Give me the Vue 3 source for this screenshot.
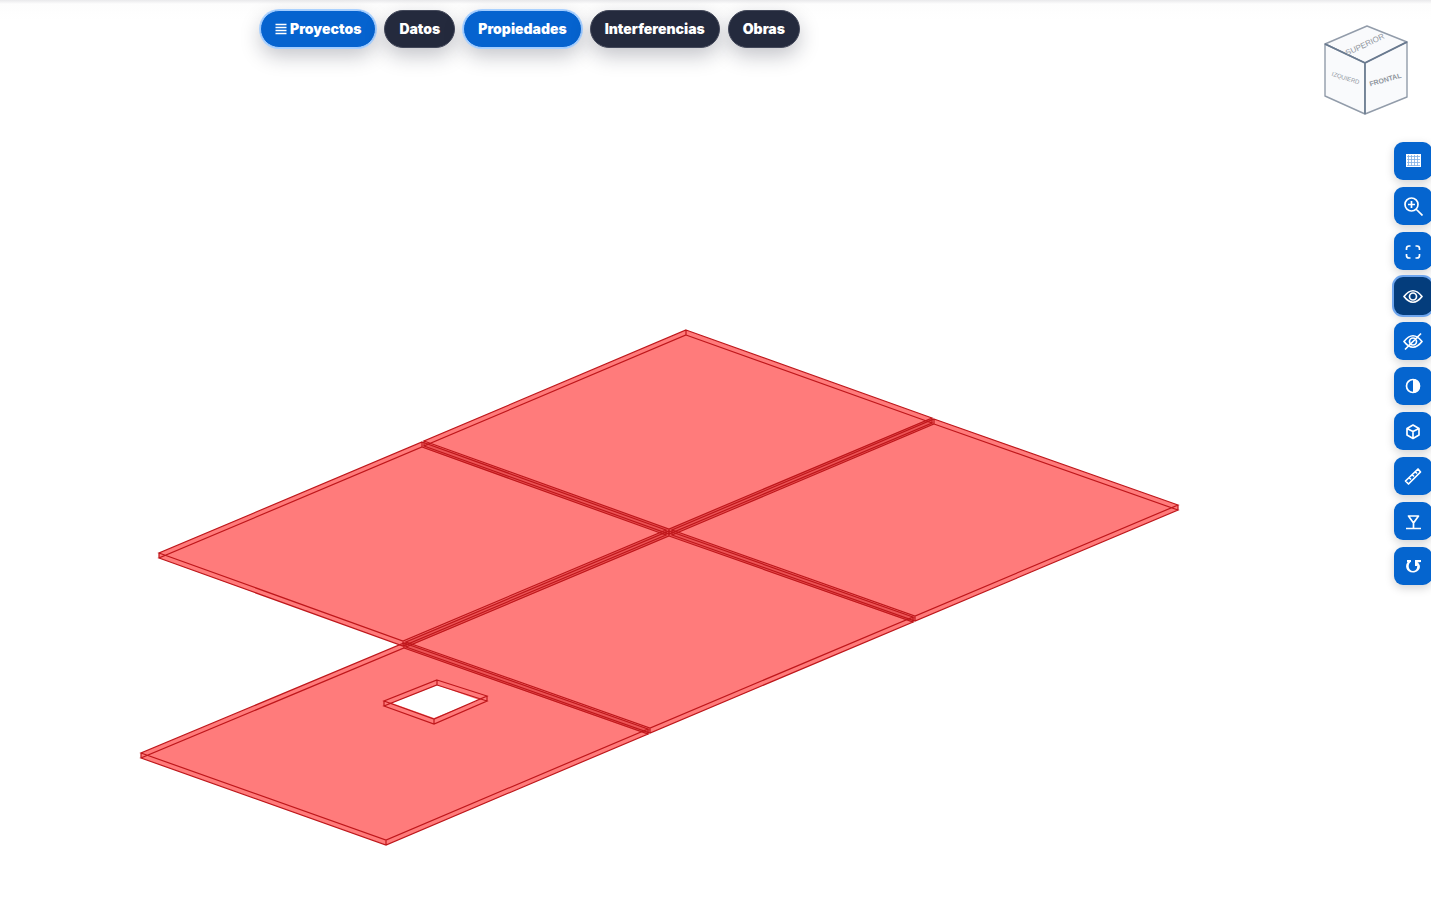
<template>
  <div class="viewer">
    <svg class="scene" viewBox="0 0 1431 920" role="img" aria-label="Modelo 3D">
      <path class="slab-fill" :d="slabFill" />
      <line v-for="(seam, index) in seams" :key="index" class="seam" :x1="seam[0]" :y1="seam[1]" :x2="seam[2]" :y2="seam[3]" />
      <path v-for="(slab, index) in slabs" :key="index" class="edge" :d="boxEdges(slab)" />
      <path class="hole" d="M437 685L479 700L434 718L392 703Z" />
      <path class="edge" :d="boxEdges(opening)" />
    </svg>

    <nav class="top-menu">
      <button
        v-for="item in menu"
        :key="item.label"
        type="button"
        class="pill"
        :class="{ active: item.active }"
      >
        <svg v-if="item.icon" class="menu-icon" viewBox="0 0 12 12" aria-hidden="true">
          <path d="M0.5 1.5h11M0.5 4.5h11M0.5 7.5h11M0.5 10.5h11" />
        </svg>
        {{ item.label }}
      </button>
    </nav>

    <svg class="view-cube" viewBox="0 0 90 96" role="img" aria-label="Cubo de vistas">
      <path class="face" d="M47 4L87 20L45 41L5 22Z" />
      <path class="face" d="M5 22L45 41V92L5 74Z" />
      <path class="face" d="M45 41L87 20V75L45 92Z" />
      <path class="cube-inner" d="M5 22L45 41L87 20M45 41V92" />
      <text class="face-label large" transform="translate(46 25) rotate(-25)">SUPERIOR</text>
      <text class="face-label small" transform="translate(25 58) rotate(17)">IZQUIERD</text>
      <text class="face-label" transform="translate(66 60) rotate(-16)">FRONTAL</text>
    </svg>

    <div class="tools">
      <button
        v-for="tool in tools"
        :key="tool.name"
        type="button"
        class="tool"
        :class="{ active: tool.active }"
        :aria-label="tool.name"
      >
        <svg viewBox="0 0 20 20" aria-hidden="true">
          <path v-if="tool.solid" class="solid" :d="tool.solid" />
          <path v-if="tool.line" class="line" :d="tool.line" />
          <path v-if="tool.thin" class="thin" :d="tool.thin" />
        </svg>
      </button>
    </div>
  </div>
</template>

<script setup>
const THICKNESS = 5;

const menu = [
  { label: 'Proyectos', active: true, icon: true },
  { label: 'Datos' },
  { label: 'Propiedades', active: true },
  { label: 'Interferencias' },
  { label: 'Obras' }
];

// top face corners: back, right, front, left
const slabs = [
  [[686, 330], [932, 418], [669, 529], [424, 441]],
  [[934, 419], [1178, 505], [915, 616], [672, 530]],
  [[422, 442], [666, 530], [403, 641], [159, 553]],
  [[669, 531], [913, 617], [650, 728], [406, 642]],
  [[404, 643], [648, 729], [386, 840], [141, 753]]
];

const opening = [[437, 680], [487, 696], [434, 719], [384, 701]];

const seams = [
  [424, 445, 914, 620],
  [932, 421, 404, 645],
  [404, 645, 649, 732]
];

const slabFill = slabs.map(([back, right, front, left]) =>
  `M${back}L${right}v${THICKNESS}L${front[0]} ${front[1] + THICKNESS}L${left[0]} ${left[1] + THICKNESS}V${left[1]}Z`
).join('');

function boxEdges(corners) {
  const lower = corners.map(([x, y]) => [x, y + THICKNESS]);
  const pillars = corners.map(([x, y]) => `M${x} ${y}v${THICKNESS}`).join('');
  return `M${corners.join('L')}ZM${lower.join('L')}Z${pillars}`;
}

const tools = [
  {
    name: 'Cuadrícula',
    solid: 'M3 3H18V16H3Z',
    thin: 'M5.5 4V15M8.5 4V15M11.5 4V15M14.5 4V15M4 5.5H17M4 8.5H17M4 11.5H17M4 14.5H17'
  },
  {
    name: 'Acercar',
    line: 'M15 8.5A6.5 6.5 0 1 1 2 8.5A6.5 6.5 0 0 1 15 8.5ZM13 13L19.5 19.5M8.5 5V12M5 8.5H12'
  },
  {
    name: 'Encuadrar',
    line: 'M3.5 9V7.5Q3.5 5 6 5H7.5M12.5 5H14Q16.5 5 16.5 7.5V9M16.5 13V14.5Q16.5 17 14 17H12.5M7.5 17H6Q3.5 17 3.5 14.5V13',
  },
  {
    name: 'Mostrar',
    active: true,
    line: 'M1 10.5Q10 -1 19 10.5Q10 22 1 10.5ZM13.5 10.5A3.5 3.5 0 1 1 6.5 10.5A3.5 3.5 0 0 1 13.5 10.5Z'
  },
  {
    name: 'Ocultar',
    line: 'M1 10.5Q10 -1 19 10.5Q10 22 1 10.5ZM13.5 10.5A3.5 3.5 0 1 1 6.5 10.5A3.5 3.5 0 0 1 13.5 10.5ZM2 18.5L18 2.5'
  },
  {
    name: 'Transparencia',
    solid: 'M10 3A7 7 0 0 1 10 17Z',
    line: 'M16.5 10A6.5 6.5 0 1 1 3.5 10A6.5 6.5 0 0 1 16.5 10Z'
  },
  {
    name: 'Sección',
    line: 'M10 4L16 7.5V14L10 17.5L4 14V7.5ZM4 7.5L10 10.5L16 7.5M10 10.5V17.5'
  },
  {
    name: 'Medir',
    line: 'M2.5 15L15 3L17.5 6L5.5 18ZM6 11.5L8 13.5M9 8.5L11 10.5M12 5.5L14 7.5'
  },
  {
    name: 'Nivel',
    line: 'M5.5 5H15.5L10.5 12ZM10.5 12V17M3 17.5H18'
  },
  {
    name: 'Restablecer',
    solid: 'M11 4H18V6L14 6.5V10H12V4Z M4 4H8V6H4Z M14 6C20 10 16 16.5 10 16.5C3 16.5 1 9 5.5 5L7.5 6C4 9 6 15 10 15C14 15 15.5 10 13 7Z'
  }
];
</script>

<style>
body {
  margin: 0;
  background: #fff;
}
</style>

<style scoped>
.viewer {
  position: relative;
  min-height: 100vh;
  overflow: hidden;
  background: linear-gradient(#e9e9eb, #fdfdfd 4px, #fff 20px);
}

.scene {
  display: block;
  width: 100%;
}

.slab-fill {
  fill: #ff7b7b;
}

.seam {
  stroke: #ec5456;
  stroke-width: 6;
}

.edge {
  fill: none;
  stroke: #bf171b;
  stroke-width: 1.2;
}

.hole {
  fill: #fff;
}

.top-menu {
  position: absolute;
  top: 10px;
  left: 260px;
  display: flex;
  gap: 8px;
}

.pill {
  display: flex;
  align-items: center;
  gap: 3px;
  height: 38px;
  padding: 0 14px;
  border: 1px solid #43485a;
  border-radius: 19px;
  background: #242a3d;
  box-shadow: 0 8px 20px rgba(20, 25, 45, 0.25);
  color: #fff;
  font-family: Inter, "Liberation Sans", sans-serif;
  font-size: 14px;
  font-weight: 900;
  line-height: 16px;
  white-space: nowrap;
}

.pill.active {
  border-color: #a3cdff;
  background: #0563cf;
  box-shadow: 0 0 0 1px #a9d1ff, 0 8px 20px rgba(20, 25, 45, 0.25);
}

.menu-icon {
  width: 12px;
  height: 12px;
  stroke: #fff;
  stroke-width: 1.3;
}

.view-cube {
  position: absolute;
  top: 22px;
  right: 21px;
  width: 90px;
  height: 96px;
}

.face {
  fill: #f9fafc;
  stroke: #929caa;
  stroke-width: 1.4;
  stroke-linejoin: round;
}

.cube-inner {
  fill: none;
  stroke: #68798f;
  stroke-width: 1.5;
}

.face-label {
  fill: #8f959d;
  font-family: "Liberation Sans", Arial, sans-serif;
  font-size: 7px;
  font-weight: 700;
  text-anchor: middle;
}

.face-label.large {
  font-size: 8px;
  font-weight: 400;
}

.face-label.small {
  font-size: 6px;
  font-weight: 400;
}

.tools {
  position: absolute;
  top: 142px;
  right: -1px;
  display: flex;
  flex-direction: column;
  gap: 7px;
}

.tool {
  display: flex;
  align-items: center;
  justify-content: center;
  width: 38px;
  height: 38px;
  padding: 0;
  border: 0;
  border-radius: 9px;
  background: #0565cf;
  box-shadow: 0 3px 10px rgba(0, 0, 0, 0.18);
}

.tool.active {
  background: #043d7c;
  box-shadow: 0 0 0 2px #6da5ee, 0 3px 10px rgba(0, 0, 0, 0.18);
}

.tool svg {
  width: 20px;
  height: 20px;
}

.solid {
  fill: #fff;
}

.line {
  fill: none;
  stroke: #fff;
  stroke-width: 1.7;
  stroke-linejoin: round;
}

.thin {
  fill: none;
  stroke: #7fb0e6;
  stroke-width: 0.8;
}
</style>
